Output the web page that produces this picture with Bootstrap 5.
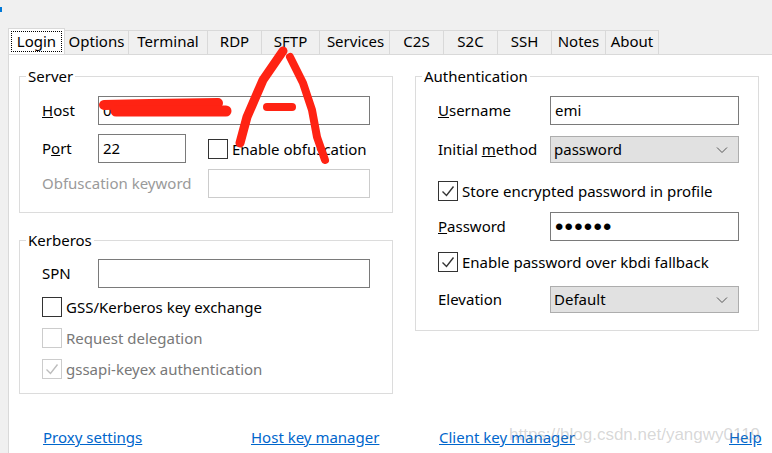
<!DOCTYPE html>
<html lang="en">
<head>
  <meta charset="UTF-8">
  <meta name="viewport" content="width=device-width, initial-scale=1.0">
  <title>Session profile</title>
  <link href="https://cdn.jsdelivr.net/npm/bootstrap@5.3.0/dist/css/bootstrap.min.css" rel="stylesheet">
  <style>
    html, body { height: 100%; }
    body { background: #f0f0f0; color: #000; font-family: "Noto Sans", "Open Sans", sans-serif; font-size: 15px; line-height: 20px; overflow: hidden; position: relative; }
    .corner-mark { width: 2px; height: 5px; background: #0078d7; margin-top: 7px; }
    .dlg-wrap { padding: 16px 0 0 8px; }
    .dlg-tabs { height: 26px; border: 0; flex-wrap: nowrap; padding-top: 2px; }
    .dlg-tabs .nav-link { height: 24px; margin: 0; padding: 0; border: 1px solid #d9d9d9; border-bottom: 0; border-left: 0; border-radius: 0; color: #000; background: #f0f0f0; text-align: center; line-height: 21px; }
    .dlg-tabs .nav-link.active { height: 26px; margin-top: -2px; background: #fff; border: 1px solid #d9d9d9; border-bottom: 0; padding: 2px; line-height: 18px; }
    .dlg-tabs .nav-link.active span { display: block; height: 21px; border: 1px dotted #000; }
    .tab-login { width: 57px; }
    .tab-options { width: 64px; }
    .tab-terminal { width: 79px; }
    .tab-rdp { width: 54px; }
    .tab-sftp { width: 58px; }
    .tab-services { width: 70px; padding-left: 2px !important; }
    .tab-ssh { width: 54px; }
    .tab-about { width: 53px; }
    .dlg-panel { height: 400px; background: #fff; border-top: 1px solid #d9d9d9; border-left: 1px solid #d9d9d9; padding: 21px 12px 0 10px; }
    .col-server { width: 374px; }
    .col-auth { width: 344px; margin-left: 22px; }
    .grp { border: 1px solid #dcdcdc; position: relative; }
    .grp legend { float: none; width: auto; font-size: inherit; line-height: 20px; margin: 0; top: -11px; left: 6px; padding: 0 2px; background: #fff; position: absolute; }
    .grp-server { height: 137px; padding: 19px 22px 0 22px; }
    .grp-kerberos { height: 154px; margin-top: 27px; padding: 18px 22px 0 22px; }
    .grp-auth { height: 255px; padding: 19px 19px 0 22px; }
    .dlg-input.form-control, .dlg-input.form-select { height: 29px; padding: 0 4px 2px; font-size: inherit; line-height: 20px; color: #000; border: 1px solid #7a7a7a; border-radius: 0; box-shadow: none; background-color: #fff; }
    .dlg-input.form-control:disabled { background: #fff; border-color: #cccccc; }
    .dlg-input.form-select { height: 27px; padding-left: 3px; background-color: #e1e1e1; border-color: #adadad; background-position: right 9px center; background-size: 14px 10px; opacity: 1; background-image: url("data:image/svg+xml,%3csvg xmlns='http://www.w3.org/2000/svg' viewBox='0 0 14 10'%3e%3cpath fill='none' stroke='%23555' d='M2 2.5l5 5 5-5'/%3e%3c/svg%3e"); }
    .dlg-input.dlg-pass { font-family: "Liberation Sans", sans-serif; font-size: 24px; letter-spacing: 1.2px; line-height: 27px; padding: 0 4px; }
    .lbl-left { width: 56px; flex: none; padding-bottom: 2px; }
    .lbl-auth { width: 112px; flex: none; white-space: nowrap; padding-bottom: 2px; }
    .lbl-off { color: #9a9a9a; width: 166px; flex: none; white-space: nowrap; padding-bottom: 2px; }
    .w-port { width: 88px; flex: none; }
    .w-fill { width: 162px; flex: none; }
    .chk { display: flex; align-items: center; gap: 4px; height: 20px; margin: 0; white-space: nowrap; }
    .chk-box { width: 20px; height: 20px; flex: none; border: 1px solid #333; background: #fff; display: block; }
    .chk-box svg { display: block; width: 18px; height: 18px; }
    .chk-off { color: #787878; }
    .chk-off .chk-box { border-color: #cccccc; }
    .gap-s6 { margin-top: 6px; }
    .gap-s9 { margin-top: 9px; }
    .gap-s11 { margin-top: 11px; }
    .gap-s14 { margin-top: 14px; }
    .gap-s18 { margin-top: 18px; }
    .chk-inline { margin-left: 22px; }
    .dlg-links { position: relative; height: 20px; margin: 33px 0 0 -10px; }
    .dlg-links a { color: #0066cc; position: absolute; top: 0; white-space: nowrap; }
    .lnk-proxy { left: 34px; }
    .lnk-host { left: 242px; }
    .lnk-client { left: 430px; }
    .lnk-help { left: 720px; }
    .overlay-scribble { position: absolute; left: 0; top: 0; pointer-events: none; }
    .watermark { position: absolute; left: 509px; top: 425px; font-family: "Liberation Sans", sans-serif; font-size: 17px; color: rgba(120,120,120,.3); white-space: nowrap; }
  </style>
</head>
<body>
  <div class="corner-mark"></div>
  <div class="dlg-wrap">
    <!-- tab strip -->
    <ul class="nav nav-tabs dlg-tabs">
      <li class="nav-item"><a class="nav-link active tab-login" href="#"><span>Login</span></a></li>
      <li class="nav-item"><a class="nav-link tab-options" href="#">Options</a></li>
      <li class="nav-item"><a class="nav-link tab-terminal" href="#">Terminal</a></li>
      <li class="nav-item"><a class="nav-link tab-rdp" href="#">RDP</a></li>
      <li class="nav-item"><a class="nav-link tab-sftp" href="#">SFTP</a></li>
      <li class="nav-item"><a class="nav-link tab-services" href="#">Services</a></li>
      <li class="nav-item"><a class="nav-link tab-rdp" href="#">C2S</a></li>
      <li class="nav-item"><a class="nav-link tab-rdp" href="#">S2C</a></li>
      <li class="nav-item"><a class="nav-link tab-ssh" href="#">SSH</a></li>
      <li class="nav-item"><a class="nav-link tab-ssh" href="#">Notes</a></li>
      <li class="nav-item"><a class="nav-link tab-about" href="#">About</a></li>
    </ul>

    <div class="dlg-panel">
      <div class="d-flex">
        <div class="col-server">
          <fieldset class="grp grp-server">
            <legend>Server</legend>
            <div class="d-flex align-items-center">
              <label class="lbl-left"><u>H</u>ost</label>
              <input class="form-control dlg-input" type="text" value="0">
            </div>
            <div class="d-flex align-items-center gap-s9">
              <label class="lbl-left">P<u>o</u>rt</label>
              <input class="form-control dlg-input w-port" type="text" value="22">
              <label class="chk chk-inline"><span class="chk-box"></span>Enable obfuscation</label>
            </div>
            <div class="d-flex align-items-center gap-s6">
              <label class="lbl-off">Obfuscation keyword</label>
              <input class="form-control dlg-input w-fill" type="text" disabled>
            </div>
          </fieldset>
          <fieldset class="grp grp-kerberos">
            <legend>Kerberos</legend>
            <div class="d-flex align-items-center">
              <label class="lbl-left">SPN</label>
              <input class="form-control dlg-input" type="text">
            </div>
            <label class="chk gap-s9"><span class="chk-box"></span>GSS/Kerberos key exchange</label>
            <label class="chk chk-off gap-s11"><span class="chk-box"></span>Request delegation</label>
            <label class="chk chk-off gap-s11"><span class="chk-box"><svg viewBox="0 0 18 18"><path d="M3.5 9.5l4 4 7-9" fill="none" stroke="#bdbdbd" stroke-width="1.4"/></svg></span>gssapi-keyex authentication</label>
          </fieldset>
        </div>
        <div class="col-auth">
          <fieldset class="grp grp-auth">
            <legend>Authentication</legend>
            <div class="d-flex align-items-center">
              <label class="lbl-auth"><u>U</u>sername</label>
              <input class="form-control dlg-input" type="text" value="emi">
            </div>
            <div class="d-flex align-items-center gap-s11">
              <label class="lbl-auth">Initial <u>m</u>ethod</label>
              <select class="form-select dlg-input"><option>password</option></select>
            </div>
            <label class="chk gap-s18"><span class="chk-box"><svg viewBox="0 0 18 18"><path d="M3.5 9.5l4 4 7-9" fill="none" stroke="#333" stroke-width="1.4"/></svg></span>Store encrypted password in profile</label>
            <div class="d-flex align-items-center gap-s11">
              <label class="lbl-auth"><u>P</u>assword</label>
              <input class="form-control dlg-input dlg-pass" type="password" value="secret">
            </div>
            <label class="chk gap-s11"><span class="chk-box"><svg viewBox="0 0 18 18"><path d="M3.5 9.5l4 4 7-9" fill="none" stroke="#333" stroke-width="1.4"/></svg></span>Enable password over kbdi fallback</label>
            <div class="d-flex align-items-center gap-s14">
              <label class="lbl-auth">Elevation</label>
              <select class="form-select dlg-input"><option>Default</option></select>
            </div>
          </fieldset>
        </div>
      </div>
      <div class="dlg-links">
        <a href="#" class="lnk-proxy">Proxy settings</a>
        <a href="#" class="lnk-host">Host key manager</a>
        <a href="#" class="lnk-client">Client key manager</a>
        <a href="#" class="lnk-help">Help</a>
      </div>
    </div>
  </div>

  <div class="watermark">https://blog.csdn.net/yangwy0119</div>

  <!-- red pen marks on top of the dialog -->
  <svg class="overlay-scribble" width="772" height="453" viewBox="0 0 772 453">
    <g fill="none" stroke="#ff2313" stroke-linecap="round" stroke-linejoin="round">
      <path stroke-width="10" d="M104 105 L150 104 L218 103"/>
      <path stroke-width="11" d="M116 111 L170 111 L226 111"/>
      <path stroke-width="8" d="M267 107 L292 107"/>
      <path stroke-width="9" d="M240 143 L247 117 L263 80 L283 51"/>
      <path stroke-width="8" d="M290 57 L303 83 L312 110 L317 137 L325 160"/>
    </g>
  </svg>
</body>
</html>
